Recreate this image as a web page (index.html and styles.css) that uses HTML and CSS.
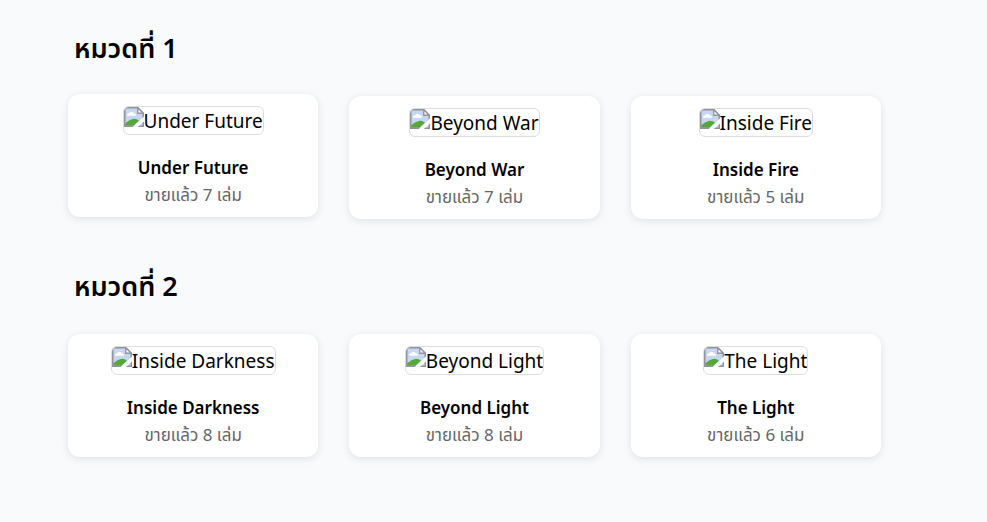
FILE: index.html
```html
<!DOCTYPE html>
<html lang="th">
<head>
<meta charset="utf-8">
<title>หมวด</title>
<link rel="stylesheet" href="styles.css">
</head>
<body>
<svg class="defs" aria-hidden="true"><symbol id="broken" viewBox="0 0 16 16"><path d="M0 0h11l5 5v11H0z" fill="#c5d7f3"/><path d="M2.500 7a1.600 1.600 0 0 1 1.500-2a2.200 2.200 0 0 1 4 0a1.500 1.500 0 0 1 1.500 2z" fill="#fff"/><path d="M1 15v-2q3-3 6-3.500q3-.5 5 1.500l-4.500 4z" fill="#54a936"/><path d="M.6 16V.6H11L15.400 5v11" fill="none" stroke="#929499" stroke-width="1.200"/><path d="M11 .6V5h4.400z" fill="#fff" stroke="#929499" stroke-width="1.100"/><path d="M0 15.400h16" stroke="#929499" stroke-width="1.200"/><path d="M7 16L16 7.500v4L11 16z" fill="#fff"/></symbol></svg>
<main class="page">
<section class="category">
<h2 class="heading">หมวดที่ 1</h2>
<div class="books">
<article class="card raised"><div class="cover"><svg class="icon"><use href="#broken"/></svg><span>Under Future</span></div><h3 class="title">Under Future</h3><p class="sold">ขายแล้ว 7 เล่ม</p></article>
<article class="card"><div class="cover"><svg class="icon"><use href="#broken"/></svg><span>Beyond War</span></div><h3 class="title">Beyond War</h3><p class="sold">ขายแล้ว 7 เล่ม</p></article>
<article class="card"><div class="cover"><svg class="icon"><use href="#broken"/></svg><span>Inside Fire</span></div><h3 class="title">Inside Fire</h3><p class="sold">ขายแล้ว 5 เล่ม</p></article>
</div>
</section>
<section class="category">
<h2 class="heading">หมวดที่ 2</h2>
<div class="books">
<article class="card"><div class="cover"><svg class="icon"><use href="#broken"/></svg><span>Inside Darkness</span></div><h3 class="title">Inside Darkness</h3><p class="sold">ขายแล้ว 8 เล่ม</p></article>
<article class="card"><div class="cover"><svg class="icon"><use href="#broken"/></svg><span>Beyond Light</span></div><h3 class="title">Beyond Light</h3><p class="sold">ขายแล้ว 8 เล่ม</p></article>
<article class="card"><div class="cover"><svg class="icon"><use href="#broken"/></svg><span>The Light</span></div><h3 class="title">The Light</h3><p class="sold">ขายแล้ว 6 เล่ม</p></article>
</div>
</section>
</main>
</body>
</html>
```
FILE: styles.css
```css
* { box-sizing: border-box; }
body { margin: 0; background: #f8fafc; color: #000; font-family: "Segoe UI", "Noto Sans", "Noto Sans Thai", sans-serif; }
.defs { position: absolute; width: 0; height: 0; }
.page { padding: 30px 106px 0 68px; }
.category { margin-bottom: 49px; }
.heading { margin: 0 6px 30px; font-size: 27px; line-height: 36px; font-weight: 600; }
.books { display: grid; grid-template-columns: repeat(3, 1fr); gap: 31px; }
.card { display: flex; flex-direction: column; align-items: center; padding: 12px 12px 11px; border-radius: 12px; background: #fff; box-shadow: 0 2px 8px rgba(0, 0, 0, .1); }
.raised { transform: translateY(-2px); }
.cover { display: flex; height: 29px; border: 1px solid #ddd; border-radius: 6px; font-size: 19px; line-height: 29px; overflow: hidden; white-space: nowrap; }
.icon { width: 20px; height: 20px; }
.title { margin: 21px 0 4px; font-size: 17px; line-height: 24px; font-weight: 600; }
.sold { margin: 0; font-size: 17px; line-height: 22px; color: #666; }
```
